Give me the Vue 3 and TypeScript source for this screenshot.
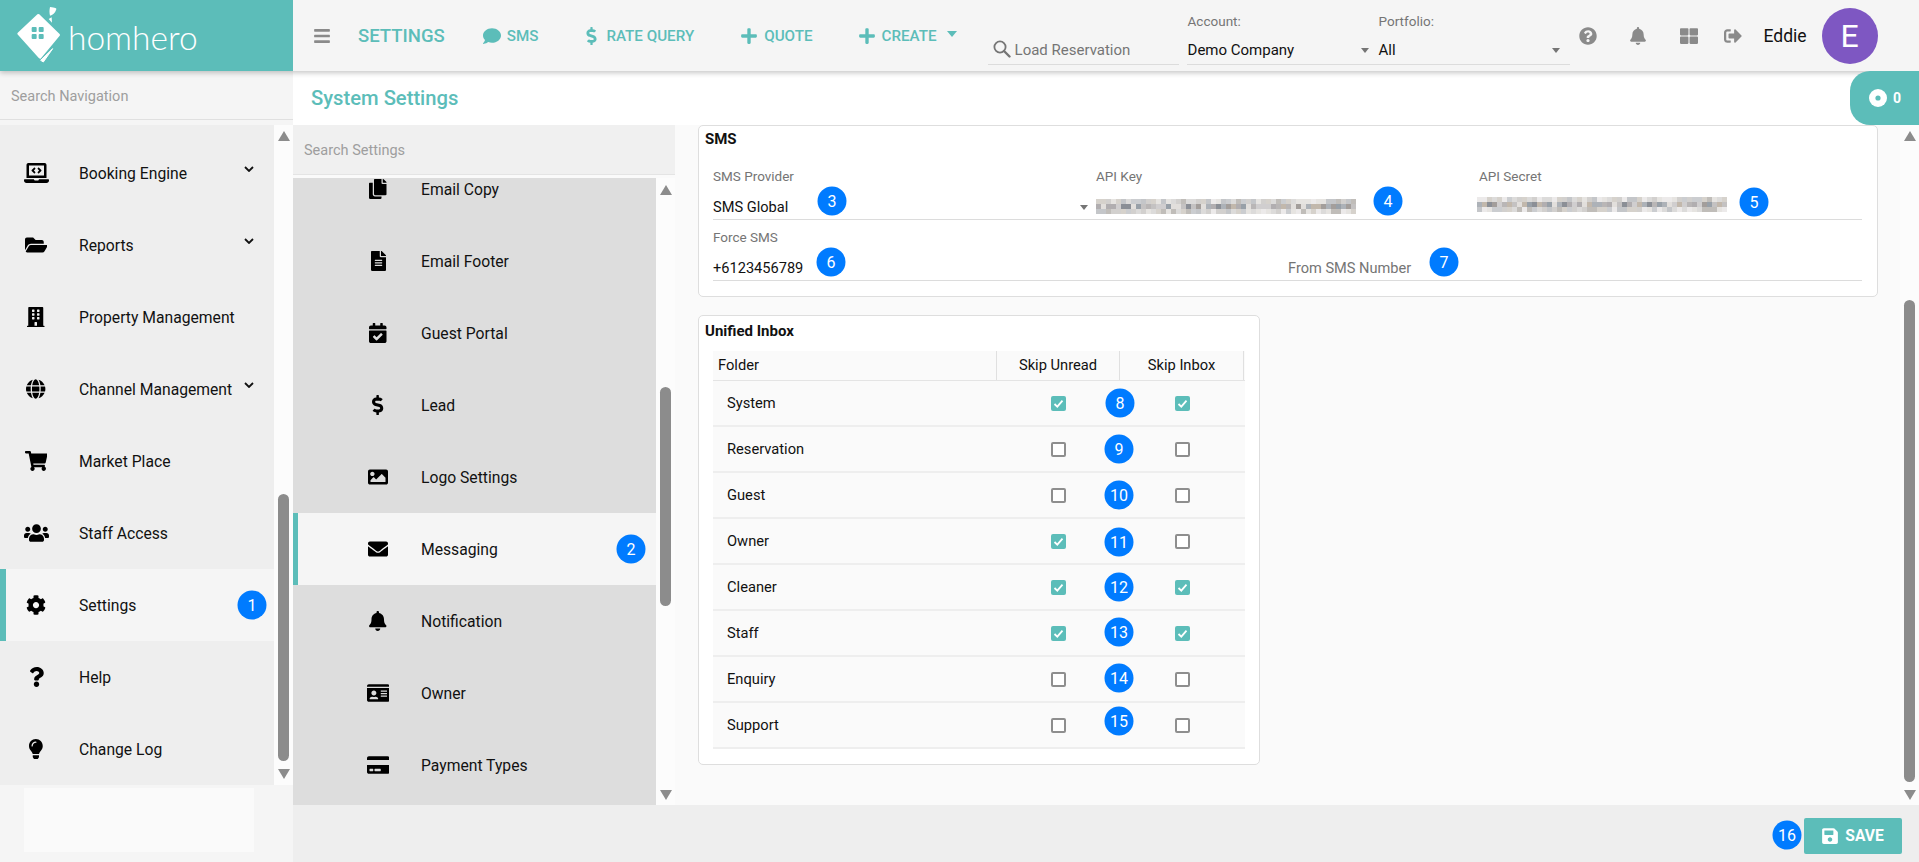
<script setup lang="ts">
interface Icon {
  w: number;
  d: string;
}

const icons: Record<string, Icon> = {
  bars: { w: 448, d: 'M16 132h416c8.837 0 16-7.163 16-16V76c0-8.837-7.163-16-16-16H16C7.163 60 0 67.163 0 76v40c0 8.837 7.163 16 16 16zm0 160h416c8.837 0 16-7.163 16-16v-40c0-8.837-7.163-16-16-16H16c-8.837 0-16 7.163-16 16v40c0 8.837 7.163 16 16 16zm0 160h416c8.837 0 16-7.163 16-16v-40c0-8.837-7.163-16-16-16H16c-8.837 0-16 7.163-16 16v40c0 8.837 7.163 16 16 16z' },
  comment: { w: 512, d: 'M256 32C114.6 32 0 125.1 0 240c0 49.6 21.4 95 57 130.7C44.5 421.1 2.7 466 2.2 466.5c-2.2 2.3-2.8 5.7-1.5 8.7S4.8 480 8 480c66.3 0 116-31.8 140.6-51.4 32.7 12.3 69 19.4 107.4 19.4 141.4 0 256-93.1 256-208S397.4 32 256 32z' },
  dollar: { w: 288, d: 'M209.2 233.4l-108-31.6C88.7 198.2 80 186.5 80 173.5c0-16.3 13.2-29.5 29.5-29.5h66.3c12.2 0 24.2 3.7 34.2 10.5 6.1 4.1 14.3 3.1 19.5-2l34.8-34c7.1-6.9 6.1-18.4-1.8-24.5C238 74.8 207.4 64.1 176 64V16c0-8.8-7.2-16-16-16h-32c-8.8 0-16 7.2-16 16v48h-2.5C45.8 64-5.4 118.7.5 183.6c4.2 46.1 39.4 83.6 83.8 96.6l102.5 30c12.5 3.7 21.2 15.3 21.2 28.3 0 16.3-13.2 29.5-29.5 29.5h-66.3C100 368 88 364.3 78 357.5c-6.1-4.1-14.3-3.1-19.5 2l-34.8 34c-7.1 6.9-6.1 18.4 1.8 24.5 24.5 19.2 55.1 29.9 86.5 30v48c0 8.8 7.2 16 16 16h32c8.8 0 16-7.2 16-16v-48.2c46.6-.9 90.3-28.6 105.7-72.7 21.5-61.6-14.6-124.8-72.5-141.7z' },
  plus: { w: 448, d: 'M416 208H272V64c0-17.67-14.33-32-32-32h-32c-17.67 0-32 14.33-32 32v144H32c-17.67 0-32 14.33-32 32v32c0 17.67 14.33 32 32 32h144v144c0 17.67 14.33 32 32 32h32c17.67 0 32-14.33 32-32V304h144c17.67 0 32-14.33 32-32v-32c0-17.67-14.33-32-32-32z' },
  help: { w: 512, d: 'M504 256c0 136.997-111.043 248-248 248S8 392.997 8 256C8 119.083 119.043 8 256 8s248 111.083 248 248zM262.655 90c-54.497 0-89.255 22.957-116.549 63.758-3.536 5.286-2.353 12.415 2.715 16.258l34.699 26.31c5.205 3.947 12.621 3.008 16.665-2.122 17.864-22.658 30.113-35.797 57.303-35.797 20.429 0 45.698 13.148 45.698 32.958 0 14.976-12.363 22.667-32.534 33.976C247.128 238.528 216 254.941 216 296v4c0 6.627 5.373 12 12 12h56c6.627 0 12-5.373 12-12v-1.333c0-28.462 83.186-29.647 83.186-106.667 0-58.002-60.165-102-116.531-102zM256 338c-25.365 0-46 20.635-46 46 0 25.364 20.635 46 46 46s46-20.636 46-46c0-25.365-20.635-46-46-46z' },
  bell: { w: 448, d: 'M224 512c35.32 0 63.97-28.65 63.97-64H160.03c0 35.35 28.65 64 63.97 64zm215.39-149.71c-19.32-20.76-55.47-51.99-55.47-154.29 0-77.7-54.48-139.9-127.94-155.16V32c0-17.67-14.32-32-31.98-32s-31.98 14.33-31.98 32v20.84C118.56 68.1 64.08 130.3 64.08 208c0 102.3-36.15 133.53-55.47 154.29-6 6.45-8.66 14.16-8.61 21.71.11 16.4 12.98 32 32.1 32h383.8c19.12 0 32-15.6 32.1-32 .05-7.55-2.61-15.27-8.61-21.71z' },
  grid: { w: 512, d: 'M296 32h192c13.255 0 24 10.745 24 24v160c0 13.255-10.745 24-24 24H296c-13.255 0-24-10.745-24-24V56c0-13.255 10.745-24 24-24zm-80 0H24C10.745 32 0 42.745 0 56v160c0 13.255 10.745 24 24 24h192c13.255 0 24-10.745 24-24V56c0-13.255-10.745-24-24-24zM0 296v160c0 13.255 10.745 24 24 24h192c13.255 0 24-10.745 24-24V296c0-13.255-10.745-24-24-24H24c-13.255 0-24 10.745-24 24zm296 184h192c13.255 0 24-10.745 24-24V296c0-13.255-10.745-24-24-24H296c-13.255 0-24 10.745-24 24v160c0 13.255 10.745 24 24 24z' },
  signout: { w: 512, d: 'M497 273L329 441c-15 15-41 4.5-41-17v-96H152c-13.3 0-24-10.7-24-24v-96c0-13.3 10.7-24 24-24h136V88c0-21.4 25.9-32 41-17l168 168c9.3 9.4 9.3 24.6 0 34zM192 436v-40c0-6.6-5.4-12-12-12H96c-17.7 0-32-14.3-32-32V160c0-17.7 14.3-32 32-32h84c6.6 0 12-5.4 12-12V76c0-6.6-5.4-12-12-12H96c-53 0-96 43-96 96v192c0 53 43 96 96 96h84c6.6 0 12-5.4 12-12z' },
  laptop: { w: 640, d: 'M255.03 261.65c6.25 6.25 16.38 6.25 22.63 0l11.31-11.31c6.25-6.25 6.25-16.38 0-22.63L253.25 192l35.71-35.72c6.25-6.25 6.25-16.38 0-22.63l-11.31-11.31c-6.25-6.25-16.38-6.25-22.63 0l-58.34 58.34c-6.25 6.25-6.25 16.38 0 22.63l58.35 58.34zm96.01-11.3l11.31 11.31c6.25 6.25 16.38 6.25 22.63 0l58.34-58.34c6.25-6.25 6.25-16.38 0-22.63l-58.34-58.34c-6.25-6.25-16.38-6.25-22.63 0l-11.31 11.31c-6.25 6.25-6.25 16.38 0 22.63L386.75 192l-35.71 35.72c-6.25 6.25-6.25 16.38 0 22.63zM624 416H381.54c-.74 19.81-14.71 32-32.74 32H288c-18.69 0-33.02-17.47-32.77-32H16c-8.8 0-16 7.2-16 16v16c0 35.2 28.8 64 64 64h512c35.2 0 64-28.8 64-64v-16c0-8.8-7.2-16-16-16zM576 48c0-26.4-21.6-48-48-48H112C85.6 0 64 21.6 64 48v336h512V48zm-64 272H128V64h384v256z' },
  folder: { w: 576, d: 'M572.694 292.093L500.27 416.248A63.997 63.997 0 0 1 444.989 448H45.025c-18.523 0-30.064-20.093-20.731-36.093l72.424-124.155A64 64 0 0 1 152 256h399.964c18.523 0 30.064 20.093 20.73 36.093zM152 224h328v-48c0-26.51-21.49-48-48-48H272l-64-64H48C21.49 64 0 85.49 0 112v278.046l69.077-118.418C86.214 242.25 117.989 224 152 224z' },
  building: { w: 448, d: 'M436 480h-20V24c0-13.255-10.745-24-24-24H56C42.745 0 32 10.745 32 24v456H12c-6.627 0-12 5.373-12 12v20h448v-20c0-6.627-5.373-12-12-12zM128 76c0-6.627 5.373-12 12-12h40c6.627 0 12 5.373 12 12v40c0 6.627-5.373 12-12 12h-40c-6.627 0-12-5.373-12-12V76zm0 96c0-6.627 5.373-12 12-12h40c6.627 0 12 5.373 12 12v40c0 6.627-5.373 12-12 12h-40c-6.627 0-12-5.373-12-12v-40zm52 148h-40c-6.627 0-12-5.373-12-12v-40c0-6.627 5.373-12 12-12h40c6.627 0 12 5.373 12 12v40c0 6.627-5.373 12-12 12zm76 160h-64v-84c0-6.627 5.373-12 12-12h40c6.627 0 12 5.373 12 12v84zm64-172c0 6.627-5.373 12-12 12h-40c-6.627 0-12-5.373-12-12v-40c0-6.627 5.373-12 12-12h40c6.627 0 12 5.373 12 12v40zm0-96c0 6.627-5.373 12-12 12h-40c-6.627 0-12-5.373-12-12v-40c0-6.627 5.373-12 12-12h40c6.627 0 12 5.373 12 12v40zm0-96c0 6.627-5.373 12-12 12h-40c-6.627 0-12-5.373-12-12V76c0-6.627 5.373-12 12-12h40c6.627 0 12 5.373 12 12v40z' },
  globe: { w: 496, d: 'M336.5 160C322 70.7 287.8 8 248 8s-74 62.7-88.5 152h177zM152 256c0 22.2 1.2 43.5 3.3 64h185.3c2.1-20.5 3.3-41.8 3.3-64s-1.2-43.5-3.3-64H155.3c-2.1 20.5-3.3 41.8-3.3 64zm324.7-96c-28.6-67.9-86.5-120.4-158-141.6 24.4 33.8 41.2 84.7 50 141.6h108zM177.2 18.4C105.8 39.6 47.8 92.1 19.3 160h108c8.7-56.9 25.5-107.8 49.9-141.6zM487.4 192H372.7c2.1 21 3.3 42.5 3.3 64s-1.2 43-3.3 64h114.6c5.5-20.5 8.6-41.8 8.6-64s-3.1-43.5-8.5-64zM120 256c0-21.5 1.2-43 3.3-64H8.6C3.2 212.5 0 233.8 0 256s3.2 43.5 8.6 64h114.6c-2-21-3.2-42.5-3.2-64zm39.5 96c14.5 89.3 48.7 152 88.5 152s74-62.7 88.5-152h-177zm159.3 141.6c71.4-21.2 129.4-73.7 158-141.6h-108c-8.8 56.9-25.6 107.8-50 141.6zM19.3 352c28.6 67.9 86.5 120.4 158 141.6-24.4-33.8-41.2-84.7-50-141.6h-108z' },
  cart: { w: 576, d: 'M528.12 301.319l47.273-208C578.806 78.301 567.391 64 551.99 64H159.208l-9.166-44.81C147.758 8.021 137.93 0 126.529 0H24C10.745 0 0 10.745 0 24v16c0 13.255 10.745 24 24 24h69.883l70.248 343.435C147.325 417.1 136 435.222 136 456c0 30.928 25.072 56 56 56s56-25.072 56-56c0-15.674-6.447-29.835-16.824-40h209.647C430.447 426.165 424 440.326 424 456c0 30.928 25.072 56 56 56s56-25.072 56-56c0-22.172-12.888-41.332-31.579-50.405l5.517-24.276c3.413-15.018-8.002-29.319-23.403-29.319H218.117l-6.545-32h293.145c11.206 0 20.92-7.754 23.403-18.681z' },
  users: { w: 640, d: 'M96 224c35.3 0 64-28.7 64-64s-28.7-64-64-64-64 28.7-64 64 28.7 64 64 64zm448 0c35.3 0 64-28.7 64-64s-28.7-64-64-64-64 28.7-64 64 28.7 64 64 64zm32 32h-64c-17.6 0-33.5 7.1-45.1 18.6 40.3 22.1 68.9 62 75.1 109.4h66c17.7 0 32-14.3 32-32v-32c0-35.3-28.7-64-64-64zm-256 0c61.9 0 112-50.1 112-112S381.9 32 320 32 208 82.1 208 144s50.1 112 112 112zm76.8 32h-8.3c-20.8 10-43.9 16-68.5 16s-47.6-6-68.5-16h-8.3C179.6 288 128 339.6 128 403.2V432c0 26.5 21.5 48 48 48h288c26.5 0 48-21.5 48-48v-28.8c0-63.6-51.6-115.2-115.2-115.2zm-223.7-13.4C161.5 263.1 145.6 256 128 256H64c-35.3 0-64 28.7-64 64v32c0 17.7 14.3 32 32 32h65.9c6.3-47.4 34.9-87.3 75.2-109.4z' },
  cog: { w: 512, d: 'M487.4 315.7l-42.6-24.6c4.3-23.2 4.3-47 0-70.2l42.6-24.6c4.9-2.8 7.1-8.6 5.5-14-11.1-35.6-30-67.8-54.7-94.6-3.8-4.1-10-5.1-14.8-2.3L380.8 110c-17.9-15.4-38.5-27.3-60.8-35.1V25.8c0-5.6-3.9-10.5-9.4-11.7-36.7-8.2-74.3-7.8-109.2 0-5.5 1.2-9.4 6.1-9.4 11.7V75c-22.2 7.9-42.8 19.8-60.8 35.1L88.7 85.5c-4.9-2.8-11-1.9-14.8 2.3-24.7 26.7-43.6 58.9-54.7 94.6-1.7 5.4.6 11.2 5.5 14L67.3 221c-4.3 23.2-4.3 47 0 70.2l-42.6 24.6c-4.9 2.8-7.1 8.6-5.5 14 11.1 35.6 30 67.8 54.7 94.6 3.8 4.1 10 5.1 14.8 2.3l42.6-24.6c17.9 15.4 38.5 27.3 60.8 35.1v49.2c0 5.6 3.9 10.5 9.4 11.7 36.7 8.2 74.3 7.8 109.2 0 5.5-1.2 9.4-6.1 9.4-11.7v-49.2c22.2-7.9 42.8-19.8 60.8-35.1l42.6 24.6c4.9 2.8 11 1.9 14.8-2.3 24.7-26.7 43.6-58.9 54.7-94.6 1.5-5.5-.7-11.3-5.6-14.1zM256 336c-44.1 0-80-35.9-80-80s35.9-80 80-80 80 35.9 80 80-35.9 80-80 80z' },
  question: { w: 384, d: 'M202.021 0C122.202 0 70.503 32.703 29.914 91.026c-7.363 10.58-5.093 25.086 5.178 32.874l43.138 32.709c10.373 7.865 25.132 6.026 33.253-4.148 25.049-31.381 43.63-49.449 82.757-49.449 30.764 0 68.816 19.799 68.816 49.631 0 22.552-18.617 34.134-48.993 51.164-35.423 19.86-82.299 44.576-82.299 106.405V320c0 13.255 10.745 24 24 24h72.471c13.255 0 24-10.745 24-24v-5.773c0-42.86 125.268-44.645 125.268-160.627C377.504 66.256 286.902 0 202.021 0zM192 373.459c-38.196 0-69.271 31.075-69.271 69.271 0 38.195 31.075 69.27 69.271 69.27s69.271-31.075 69.271-69.271-31.075-69.27-69.271-69.27z' },
  bulb: { w: 352, d: 'M96.06 454.35c.01 6.29 1.87 12.45 5.36 17.69l17.09 25.69a31.99 31.99 0 0 0 26.64 14.28h61.71a31.99 31.99 0 0 0 26.64-14.28l17.09-25.69a31.989 31.989 0 0 0 5.36-17.69l.04-38.35H96.01l.05 38.35zM0 176c0 44.37 16.45 84.85 43.56 115.78 16.52 18.85 42.36 58.23 52.21 91.45.04.26.07.52.11.78h160.24c.04-.26.07-.51.11-.78 9.85-33.22 35.69-72.6 52.21-91.45C335.55 260.85 352 220.37 352 176 352 78.61 272.91-.3 175.45 0 73.44.31 0 82.97 0 176zm176-80c-44.11 0-80 35.89-80 80 0 8.84-7.16 16-16 16s-16-7.16-16-16c0-61.76 50.24-112 112-112 8.84 0 16 7.16 16 16s-7.16 16-16 16z' },
  copy: { w: 448, d: 'M320 448v40c0 13.255-10.745 24-24 24H24c-13.255 0-24-10.745-24-24V120c0-13.255 10.745-24 24-24h72v296c0 30.879 25.121 56 56 56h168zm0-344V0H152c-13.255 0-24 10.745-24 24v368c0 13.255 10.745 24 24 24h272c13.255 0 24-10.745 24-24V128H344c-13.2 0-24-10.8-24-24zm120.971-31.029L375.029 7.029A24 24 0 0 0 358.059 0H352v96h96v-6.059a24 24 0 0 0-7.029-16.97z' },
  file: { w: 384, d: 'M224 136V0H24C10.7 0 0 10.7 0 24v464c0 13.3 10.7 24 24 24h336c13.3 0 24-10.7 24-24V160H248c-13.2 0-24-10.8-24-24zm64 236c0 6.6-5.4 12-12 12H108c-6.6 0-12-5.4-12-12v-8c0-6.6 5.4-12 12-12h168c6.6 0 12 5.4 12 12v8zm0-64c0 6.6-5.4 12-12 12H108c-6.6 0-12-5.4-12-12v-8c0-6.6 5.4-12 12-12h168c6.6 0 12 5.4 12 12v8zm0-72v8c0 6.6-5.4 12-12 12H108c-6.6 0-12-5.4-12-12v-8c0-6.6 5.4-12 12-12h168c6.6 0 12 5.4 12 12zm96-114.1v6.1H256V0h6.1c6.4 0 12.5 2.5 17 7l97.9 98c4.5 4.5 7 10.6 7 16.9z' },
  calendar: { w: 448, d: 'M436 160H12c-6.627 0-12-5.373-12-12v-36c0-26.51 21.49-48 48-48h48V12c0-6.627 5.373-12 12-12h40c6.627 0 12 5.373 12 12v52h128V12c0-6.627 5.373-12 12-12h40c6.627 0 12 5.373 12 12v52h48c26.51 0 48 21.49 48 48v36c0 6.627-5.373 12-12 12zM12 192h424c6.627 0 12 5.373 12 12v260c0 26.51-21.49 48-48 48H48c-26.51 0-48-21.49-48-48V204c0-6.627 5.373-12 12-12zm333.296 95.947l-28.169-28.398c-4.667-4.705-12.265-4.736-16.97-.068L194.12 364.665l-45.98-46.352c-4.667-4.705-12.266-4.736-16.971-.068l-28.397 28.17c-4.705 4.667-4.736 12.265-.068 16.97l82.601 83.269c4.667 4.705 12.265 4.736 16.97.068l142.953-141.805c4.705-4.667 4.736-12.265.068-16.97z' },
  image: { w: 512, d: 'M464 448H48c-26.51 0-48-21.49-48-48V112c0-26.51 21.49-48 48-48h416c26.51 0 48 21.49 48 48v288c0 26.51-21.49 48-48 48zM112 120c-30.928 0-56 25.072-56 56s25.072 56 56 56 56-25.072 56-56-25.072-56-56-56zM64 384h384V272l-87.515-87.515c-4.686-4.686-12.284-4.686-16.971 0L208 320l-55.515-55.515c-4.686-4.686-12.284-4.686-16.971 0L64 336v48z' },
  envelope: { w: 512, d: 'M502.3 190.8c3.9-3.1 9.7-.2 9.7 4.7V400c0 26.5-21.5 48-48 48H48c-26.5 0-48-21.5-48-48V195.6c0-5 5.7-7.8 9.7-4.7 22.4 17.4 52.1 39.5 154.1 113.6 21.1 15.4 56.7 47.8 92.2 47.6 35.7.3 72-32.8 92.3-47.6 102-74.1 131.6-96.3 154-113.7zM256 320c23.2.4 56.6-29.2 73.4-41.4 132.7-96.3 142.8-104.7 173.4-128.7 5.8-4.5 9.2-11.5 9.2-18.9v-19c0-26.5-21.5-48-48-48H48C21.5 64 0 85.5 0 112v19c0 7.4 3.4 14.3 9.2 18.9 30.6 23.9 40.7 32.4 173.4 128.7 16.8 12.2 50.2 41.8 73.4 41.4z' },
  idcard: { w: 576, d: 'M528 32H48C21.5 32 0 53.5 0 80v16h576V80c0-26.5-21.5-48-48-48zM0 432c0 26.5 21.5 48 48 48h480c26.5 0 48-21.5 48-48V128H0v304zm352-232c0-4.4 3.6-8 8-8h144c4.4 0 8 3.6 8 8v16c0 4.4-3.6 8-8 8H360c-4.4 0-8-3.6-8-8v-16zm0 64c0-4.4 3.6-8 8-8h144c4.4 0 8 3.6 8 8v16c0 4.4-3.6 8-8 8H360c-4.4 0-8-3.6-8-8v-16zm0 64c0-4.4 3.6-8 8-8h144c4.4 0 8 3.6 8 8v16c0 4.4-3.6 8-8 8H360c-4.4 0-8-3.6-8-8v-16zM176 192c35.3 0 64 28.7 64 64s-28.7 64-64 64-64-28.7-64-64 28.7-64 64-64zM67.1 396.2C75.5 370.5 99.6 352 128 352h8.2c12.3 5.1 25.7 8 39.8 8s27.6-2.9 39.8-8h8.2c28.4 0 52.5 18.5 60.9 44.2 3.2 9.9-5.2 19.8-15.6 19.8H82.7c-10.4 0-18.8-10-15.6-19.8z' },
  card: { w: 576, d: 'M0 432c0 26.5 21.5 48 48 48h480c26.5 0 48-21.5 48-48V256H0v176zm192-68c0-6.6 5.4-12 12-12h136c6.6 0 12 5.4 12 12v40c0 6.6-5.4 12-12 12H204c-6.6 0-12-5.4-12-12v-40zm-128 0c0-6.6 5.4-12 12-12h72c6.6 0 12 5.4 12 12v40c0 6.6-5.4 12-12 12H76c-6.6 0-12-5.4-12-12v-40zM576 80v48H0V80c0-26.5 21.5-48 48-48h480c26.5 0 48 21.5 48 48z' },
  save: { w: 448, d: 'M433.941 129.941l-83.882-83.882A48 48 0 0 0 316.118 32H48C21.49 32 0 53.49 0 80v352c0 26.51 21.49 48 48 48h352c26.51 0 48-21.49 48-48V163.882a48 48 0 0 0-14.059-33.941zM224 416c-35.346 0-64-28.654-64-64 0-35.346 28.654-64 64-64s64 28.654 64 64c0 35.346-28.654 64-64 64zm96-304.52V212c0 6.627-5.373 12-12 12H76c-6.627 0-12-5.373-12-12V108c0-6.627 5.373-12 12-12h228.52c3.183 0 6.235 1.264 8.485 3.515l3.48 3.48A11.996 11.996 0 0 1 320 111.48z' },
};

const navItems = [
  { label: 'Booking Engine', icon: 'laptop', more: true },
  { label: 'Reports', icon: 'folder', more: true },
  { label: 'Property Management', icon: 'building' },
  { label: 'Channel Management', icon: 'globe', more: true },
  { label: 'Market Place', icon: 'cart' },
  { label: 'Staff Access', icon: 'users' },
  { label: 'Settings', icon: 'cog', active: true },
  { label: 'Help', icon: 'question' },
  { label: 'Change Log', icon: 'bulb' },
];

const settingItems = [
  { label: 'Email Copy', icon: 'copy' },
  { label: 'Email Footer', icon: 'file' },
  { label: 'Guest Portal', icon: 'calendar' },
  { label: 'Lead', icon: 'dollar' },
  { label: 'Logo Settings', icon: 'image' },
  { label: 'Messaging', icon: 'envelope', active: true },
  { label: 'Notification', icon: 'bell' },
  { label: 'Owner', icon: 'idcard' },
  { label: 'Payment Types', icon: 'card' },
];

const folders = [
  { name: 'System', unread: true, inbox: true },
  { name: 'Reservation', unread: false, inbox: false },
  { name: 'Guest', unread: false, inbox: false },
  { name: 'Owner', unread: true, inbox: false },
  { name: 'Cleaner', unread: true, inbox: true },
  { name: 'Staff', unread: true, inbox: true },
  { name: 'Enquiry', unread: false, inbox: false },
  { name: 'Support', unread: false, inbox: false },
];

// numbered callouts drawn over the screenshot: centre x / y on the page
const badges = [
  [252, 605], [631, 549], [832, 201], [1388, 201], [1754, 202], [831, 262], [1444, 262],
  [1120, 403], [1119, 449], [1119, 495], [1119, 542], [1119, 587], [1119, 632], [1119, 678], [1119, 721],
  [1787, 835],
];

// pixelated stand-in for the masked API keys
function mosaic(seed: number, cols: number): string[] {
  const mid = ['#a39e9b', '#b9b6b6', '#98a0a8', '#c4c2c2', '#adb2b8', '#8b8f96', '#d0cecf', '#c2b8ac', '#b1aeb0', '#e2dfdc'];
  const edge = ['#d2d0ce', '#c4c6c9', '#dcdbda', '#e6e4e1', '#cbcdd0', '#c0bdb9', '#eceaea', '#d6d2cc'];
  const out: string[] = [];
  let s = seed;
  for (let r = 0; r < 3; r++) {
    const tones = r === 1 ? mid : edge;
    for (let c = 0; c < cols; c++) {
      s = (s * 9301 + 49297) % 233280;
      out.push(tones[Math.floor((s / 233280) * tones.length)]);
    }
  }
  return out;
}
const apiKeyBlur = mosaic(17, 52);
const apiSecretBlur = mosaic(91, 50);
</script>

<template>
  <div class="app">
    <header class="topbar">
      <div class="brand">
        <svg class="brand__mark" viewBox="0 0 180 213" aria-hidden="true">
          <path d="M85 46 L146 105 L90 172 L26 101 Z" fill="#fff" stroke="#fff" stroke-width="8" stroke-linejoin="round" />
          <path d="M142 130 L96 186" stroke="#5cbdb9" stroke-width="8" />
          <path d="M128 146 L92 181 L100 186 L128 146 Z" fill="#fff" stroke="#fff" stroke-width="3" stroke-linejoin="round" />
          <path d="M120 21 C136 24 140 24 139 28 C135 40 128 46 120 47 C118 38 118 30 120 21 Z" fill="#fff" />
          <path d="M116 57 L126 68 L125 52 Z" fill="#fff" />
          <rect x="65" y="81" width="15" height="15" rx="3" fill="#5cbdb9" />
          <rect x="86" y="81" width="15" height="15" rx="3" fill="#5cbdb9" />
          <rect x="65" y="102" width="15" height="15" rx="3" fill="#5cbdb9" />
          <rect x="86" y="102" width="15" height="15" rx="3" fill="#5cbdb9" />
        </svg>
        <span class="brand__name">homhero</span>
      </div>

      <svg class="topbar__menu" :viewBox="`0 0 ${icons.bars.w} 512`" aria-hidden="true"><path :d="icons.bars.d" /></svg>
      <span class="topbar__title">SETTINGS</span>
      <a class="action action--sms"><svg class="action__icon" :viewBox="`0 0 ${icons.comment.w} 512`"><path :d="icons.comment.d" /></svg>SMS</a>
      <a class="action action--rate"><svg class="action__icon action__icon--dollar" :viewBox="`0 0 ${icons.dollar.w} 512`"><path :d="icons.dollar.d" /></svg>RATE QUERY</a>
      <a class="action action--quote"><svg class="action__icon" :viewBox="`0 0 ${icons.plus.w} 512`"><path :d="icons.plus.d" /></svg>QUOTE</a>
      <a class="action action--create"><svg class="action__icon" :viewBox="`0 0 ${icons.plus.w} 512`"><path :d="icons.plus.d" /></svg>CREATE<span class="action__caret"></span></a>

      <div class="hfield hfield--search">
        <svg class="hfield__glass" viewBox="0 0 18 18" aria-hidden="true">
          <circle cx="7" cy="7" r="5.6" fill="none" stroke="#757575" stroke-width="1.8" />
          <path d="M11 11 L16.5 16.5" stroke="#757575" stroke-width="2.4" stroke-linecap="round" />
        </svg>
        <span class="hfield__placeholder">Load Reservation</span>
      </div>
      <div class="hfield hfield--select hfield--account">
        <label>Account:</label>
        <span class="hfield__value">Demo Company</span>
        <span class="arrow"></span>
      </div>
      <div class="hfield hfield--select hfield--portfolio">
        <label>Portfolio:</label>
        <span class="hfield__value">All</span>
        <span class="arrow"></span>
      </div>

      <svg class="ticon ticon--help" viewBox="0 0 512 512" aria-hidden="true"><path :d="icons.help.d" /></svg>
      <svg class="ticon ticon--bell" viewBox="0 0 448 512" aria-hidden="true"><path :d="icons.bell.d" /></svg>
      <svg class="ticon ticon--grid" viewBox="0 0 512 512" aria-hidden="true"><path :d="icons.grid.d" /></svg>
      <svg class="ticon ticon--out" viewBox="0 0 512 512" aria-hidden="true"><path :d="icons.signout.d" /></svg>
      <span class="topbar__user">Eddie</span>
      <span class="topbar__avatar">E</span>
    </header>

    <div class="layout">
      <aside class="sidebar">
        <div class="sidebar__search">Search Navigation</div>
        <div class="sidebar__body">
          <nav class="menu menu--nav">
            <a v-for="item in navItems" :key="item.label" class="menu__item" :class="{ 'menu__item--active': item.active }">
              <span class="menu__icon">
                <svg :viewBox="`0 0 ${icons[item.icon].w} 512`" :width="(icons[item.icon].w / 512) * 20" height="20"><path :d="icons[item.icon].d" /></svg>
              </span>
              <span class="menu__label">{{ item.label }}</span>
              <svg v-if="item.more" class="menu__chevron" viewBox="0 0 10 6"><path d="M1 1 L5 5 L9 1" /></svg>
            </a>
          </nav>
          <div class="scroll scroll--nav">
            <span class="scroll__up"></span>
            <span class="scroll__thumb"></span>
            <span class="scroll__down"></span>
          </div>
        </div>
        <div class="sidebar__foot"><div class="sidebar__slot"></div></div>
      </aside>

      <main class="main">
        <div class="main__title">System Settings</div>
        <div class="main__panes">
          <section class="settings">
            <div class="settings__search">Search Settings</div>
            <div class="settings__body">
              <nav class="menu menu--settings">
                <a v-for="item in settingItems" :key="item.label" class="menu__item" :class="{ 'menu__item--active': item.active }">
                  <span class="menu__icon">
                    <svg :viewBox="`0 0 ${icons[item.icon].w} 512`" :width="(icons[item.icon].w / 512) * 20" height="20"><path :d="icons[item.icon].d" /></svg>
                  </span>
                  <span class="menu__label">{{ item.label }}</span>
                </a>
              </nav>
              <div class="scroll scroll--settings">
                <span class="scroll__up"></span>
                <span class="scroll__thumb"></span>
                <span class="scroll__down"></span>
              </div>
            </div>
          </section>

          <section class="content">
            <div class="content__scroll">
              <div class="card card--sms">
                <h3 class="card__title">SMS</h3>
                <div class="fields fields--three">
                  <div class="field">
                    <label>SMS Provider</label>
                    <div class="field__value">SMS Global<span class="arrow"></span></div>
                  </div>
                  <div class="field">
                    <label>API Key</label>
                    <div class="field__value">
                      <div class="blur blur--key"><i v-for="(c, i) in apiKeyBlur" :key="i" :style="{ background: c }"></i></div>
                    </div>
                  </div>
                  <div class="field">
                    <label>API Secret</label>
                    <div class="field__value">
                      <div class="blur blur--secret"><i v-for="(c, i) in apiSecretBlur" :key="i" :style="{ background: c }"></i></div>
                    </div>
                  </div>
                </div>
                <div class="fields fields--two">
                  <div class="field">
                    <label>Force SMS</label>
                    <div class="field__value">+6123456789</div>
                  </div>
                  <div class="field">
                    <label class="field__ghost">&nbsp;</label>
                    <div class="field__value field__value--placeholder">From SMS Number</div>
                  </div>
                </div>
              </div>

              <div class="card card--inbox">
                <h3 class="card__title">Unified Inbox</h3>
                <div class="inbox">
                  <div class="inbox__head">
                    <span class="inbox__folder">Folder</span>
                    <span class="inbox__col">Skip Unread</span>
                    <span class="inbox__col">Skip Inbox</span>
                  </div>
                  <div v-for="f in folders" :key="f.name" class="inbox__row">
                    <span class="inbox__name">{{ f.name }}</span>
                    <span class="inbox__check">
                      <span class="check" :class="{ 'check--on': f.unread }">
                        <svg v-if="f.unread" viewBox="0 0 15 15"><path d="M3.5 8 L6.3 10.6 L11.5 4.6" /></svg>
                      </span>
                    </span>
                    <span class="inbox__check">
                      <span class="check" :class="{ 'check--on': f.inbox }">
                        <svg v-if="f.inbox" viewBox="0 0 15 15"><path d="M3.5 8 L6.3 10.6 L11.5 4.6" /></svg>
                      </span>
                    </span>
                  </div>
                </div>
              </div>
            </div>
            <div class="scroll scroll--content">
              <span class="scroll__up"></span>
              <span class="scroll__thumb"></span>
              <span class="scroll__down"></span>
            </div>
          </section>
        </div>
        <footer class="savebar">
          <button type="button" class="savebar__btn">
            <svg viewBox="0 0 448 512" width="16" height="18" aria-hidden="true"><path :d="icons.save.d" /></svg>
            SAVE
          </button>
        </footer>
      </main>
    </div>

    <div class="queue">
      <svg viewBox="0 0 18 18" width="18" height="18" aria-hidden="true">
        <circle cx="9" cy="9" r="9" fill="#fff" />
        <circle cx="9" cy="9" r="2.6" fill="#5cbdb9" />
      </svg>
      <span>0</span>
    </div>

    <span
      v-for="(b, i) in badges"
      :key="i"
      class="badge"
      :style="{ left: b[0] + 'px', top: b[1] + 'px' }"
    >{{ i + 1 }}</span>
  </div>
</template>

<style>
html,
body {
  margin: 0;
  overflow: hidden;
}
</style>

<style scoped>
.app {
  position: relative;
  display: flex;
  flex-direction: column;
  width: 1919px;
  height: 862px;
  overflow: hidden;
  background: #fafafa;
  color: #111;
  font-family: Roboto, "Liberation Sans", sans-serif;
  font-size: 14.7px;
}

/* top bar */
.topbar {
  position: relative;
  z-index: 2;
  display: flex;
  align-items: center;
  flex: 0 0 71px;
  background: #f5f5f5;
  box-shadow: 0 2px 5px rgba(0, 0, 0, 0.22);
}

.brand {
  display: flex;
  align-items: center;
  flex: 0 0 293px;
  height: 100%;
  padding-left: 10px;
  box-sizing: border-box;
  background: #5cbdb9;
}

.brand__mark {
  flex: 0 0 60px;
  width: 60px;
  height: 71px;
}

.brand__name {
  margin-left: -2px;
  padding-top: 4px;
  color: #fff;
  font-family: Lato, sans-serif;
  font-size: 33.5px;
  font-weight: 300;
  line-height: 1;
}

.topbar__menu {
  flex: none;
  width: 16px;
  height: 18px;
  margin-left: 21px;
  fill: #8a8a8a;
}

.topbar__title {
  margin-left: 28px;
  color: #5cbdb9;
  font-size: 18.5px;
  font-weight: 500;
}

.action {
  display: inline-flex;
  align-items: center;
  color: #5cbdb9;
  font-size: 15.2px;
  font-weight: 500;
  fill: #5cbdb9;
  white-space: nowrap;
}

.action__icon {
  flex: none;
  width: 18px;
  height: 18px;
  margin-right: 6px;
}

.action__icon--dollar {
  width: 11px;
  margin-right: 9px;
}

.action--sms {
  margin-left: 38px;
}

.action--rate {
  margin-left: 48px;
}

.action--quote {
  margin-left: 47px;
}

.action--create {
  margin-left: 46px;
}

.action--quote .action__icon,
.action--create .action__icon {
  width: 16px;
  margin-right: 7px;
}

.action__caret {
  width: 0;
  height: 0;
  margin: -4px 0 0 10px;
  border-left: 5px solid transparent;
  border-right: 5px solid transparent;
  border-top: 6px solid #5cbdb9;
}

.hfield {
  position: relative;
  flex: none;
  align-self: flex-start;
  box-sizing: border-box;
  height: 65px;
  border-bottom: 1px solid #dcdcdc;
}

.hfield--search {
  display: flex;
  align-items: flex-end;
  width: 191px;
  margin-left: 31px;
  padding: 0 0 5px 5px;
}

.hfield__glass {
  flex: none;
  width: 18px;
  height: 18px;
  margin-bottom: 1px;
}

.hfield__placeholder {
  margin-left: 4px;
  color: #757575;
  font-size: 15px;
  line-height: 18px;
}

.hfield--select {
  display: flex;
  flex-direction: column;
  justify-content: space-between;
  padding: 12px 0 5px 1px;
}

.hfield--account {
  width: 192px;
  margin-left: 8px;
}

.hfield--portfolio {
  width: 191px;
  padding-left: 0;
}

.hfield label {
  color: #757575;
  font-size: 13.5px;
  line-height: 18px;
}

.hfield__value {
  color: #111;
  font-size: 15px;
  line-height: 18px;
}

.arrow {
  position: absolute;
  width: 0;
  height: 0;
  border-left: 4.5px solid transparent;
  border-right: 4.5px solid transparent;
  border-top: 5px solid #757575;
}

.hfield .arrow {
  right: 10px;
  bottom: 11px;
}

.ticon {
  flex: none;
  height: 18px;
  fill: #8a8a8a;
}

.ticon--help {
  width: 18px;
  margin-left: 9px;
}

.ticon--bell {
  width: 16px;
  margin-left: 33px;
}

.ticon--grid {
  width: 18px;
  margin-left: 34px;
}

.ticon--out {
  width: 18px;
  margin-left: 26px;
}

.topbar__user {
  margin-left: 22px;
  font-size: 17.5px;
}

.topbar__avatar {
  display: flex;
  flex: none;
  align-items: center;
  justify-content: center;
  width: 56px;
  height: 56px;
  margin-left: 15px;
  border-radius: 50%;
  background: #7e57c2;
  color: #fff;
  font-size: 32px;
}

/* columns under the bar */
.layout {
  display: flex;
  flex: 1;
  min-height: 0;
}

.sidebar {
  display: flex;
  flex-direction: column;
  flex: 0 0 293px;
  background: #f5f5f5;
}

.sidebar__search {
  flex: 0 0 49px;
  box-sizing: border-box;
  padding: 18px 0 0 11px;
  border-bottom: 1px solid #e0e0e0;
  color: #9e9e9e;
  font-size: 14.5px;
  line-height: 16px;
}

.sidebar__body {
  display: flex;
  flex: 0 0 660px;
  margin-top: 5px;
  min-height: 0;
}

.sidebar__foot {
  flex: 1;
  padding: 3px 39px 10px 24px;
}

.sidebar__slot {
  height: 64px;
  background: #fafafa;
}

.menu {
  flex: 1;
  min-width: 0;
  overflow: hidden;
}

.menu--nav {
  padding-top: 12px;
  background: #eeeeee;
}

.menu--settings {
  background: #dddddd;
}

.menu__item {
  display: flex;
  align-items: center;
  box-sizing: border-box;
  height: 72px;
  color: #111;
}

.menu--nav .menu__item {
  padding: 0 20px 0 19px;
}

.menu--settings .menu__item {
  padding-left: 68px;
}

.menu--settings .menu__item:first-child {
  margin-top: -25px;
}

.menu__item--active {
  background: #f5f5f5;
}

.menu--nav .menu__item--active {
  box-shadow: inset 6px 0 0 #5cbdb9;
}

.menu--settings .menu__item--active {
  box-shadow: inset 5px 0 0 #5cbdb9;
}

.menu__icon {
  display: flex;
  flex: 0 0 34px;
  align-items: center;
  justify-content: center;
  margin-right: 26px;
  fill: #000;
}

.menu__label {
  flex: 1;
  white-space: nowrap;
  font-size: 15.7px;
}

.menu__chevron {
  flex: none;
  width: 10px;
  height: 6px;
  margin-top: -9px;
  fill: none;
  stroke: #111;
  stroke-width: 1.8;
}

/* scrollbars */
.scroll {
  display: flex;
  flex-direction: column;
  align-items: center;
  flex: 0 0 19px;
  background: #fcfcfc;
}

.scroll__up,
.scroll__down {
  flex: none;
  width: 0;
  height: 0;
  border-left: 6px solid transparent;
  border-right: 6px solid transparent;
}

.scroll__up {
  margin-top: 6px;
  border-bottom: 10px solid #8c8c8c;
}

.scroll__down {
  margin-top: 8px;
  border-top: 10px solid #8c8c8c;
}

.scroll__thumb {
  flex: none;
  width: 11px;
  border-radius: 6px;
  background: #8c8c8c;
}

.scroll--nav .scroll__thumb {
  height: 267px;
  margin-top: 353px;
}

.scroll--settings .scroll__thumb {
  height: 219px;
  margin-top: 192px;
}

.scroll--settings .scroll__up {
  margin-top: 7px;
}

.scroll--settings .scroll__down {
  margin-top: 184px;
}

.scroll--content .scroll__thumb {
  height: 482px;
  margin-top: 159px;
}

/* main */
.main {
  display: flex;
  flex-direction: column;
  flex: 1;
  min-width: 0;
}

.main__title {
  flex: 0 0 54px;
  box-sizing: border-box;
  padding: 16px 0 0 18px;
  background: #fff;
  color: #5cbdb9;
  font-size: 20.2px;
  font-weight: 500;
  line-height: 22px;
}

.main__panes {
  display: flex;
  flex: 0 0 680px;
  min-height: 0;
}

.settings {
  display: flex;
  flex-direction: column;
  flex: 0 0 382px;
  min-height: 0;
}

.settings__search {
  flex: 0 0 50px;
  box-sizing: border-box;
  padding: 18px 0 0 11px;
  border-bottom: 1px solid #e4e4e4;
  background: #f0f0f0;
  color: #9e9e9e;
  font-size: 14.5px;
  line-height: 16px;
}

.settings__body {
  display: flex;
  flex: 1;
  margin-top: 3px;
  min-height: 0;
}

.content {
  display: flex;
  flex: 1;
  min-width: 0;
  background: #fafafa;
}

.content__scroll {
  flex: 1;
  min-width: 0;
  padding: 0 22px 0 23px;
}

.card {
  box-sizing: border-box;
  border: 1px solid #dedede;
  border-radius: 5px;
  background: #fff;
}

.card--sms {
  height: 172px;
  padding: 0 15px 0 14px;
}

.card--inbox {
  width: 562px;
  height: 450px;
  margin-top: 18px;
  padding: 0 14px;
}

.card__title {
  box-sizing: border-box;
  height: 40px;
  margin: 0 0 0 -8px;
  padding-top: 3px;
  font-size: 15px;
  font-weight: 700;
  line-height: 20px;
}

.card--inbox .card__title {
  height: 35px;
  padding-top: 5px;
}

.fields {
  display: grid;
}

.fields--three {
  grid-template-columns: 383px 383px 1fr;
}

.fields--two {
  grid-template-columns: 575px 1fr;
  margin-top: 7px;
}

.field label {
  display: block;
  color: #757575;
  font-size: 13.5px;
  line-height: 20px;
}

.field__value {
  position: relative;
  box-sizing: border-box;
  height: 34px;
  padding-top: 12px;
  border-bottom: 1px solid #dcdcdc;
  font-size: 14.6px;
  line-height: 18px;
}

.field__value--placeholder {
  color: #757575;
}

.field .arrow {
  right: 8px;
  top: 19px;
}

.blur {
  display: grid;
  width: max-content;
  margin-top: 1px;
}

.blur i {
  display: block;
  height: 5px;
}

.blur--key {
  grid-template-columns: repeat(52, 5px);
}

.blur--secret {
  grid-template-columns: repeat(50, 5px);
  margin-top: -1px;
  margin-left: -2px;
}

.inbox {
  background: #fafafa;
}

.inbox__head,
.inbox__row {
  display: grid;
  grid-template-columns: 284px 123px 124px;
  align-items: center;
}

.inbox__head {
  box-sizing: border-box;
  height: 30px;
  border-bottom: 1px solid #e4e4e4;
}

.inbox__folder {
  padding-left: 5px;
  border-right: 1px solid #e0e0e0;
  line-height: 29px;
}

.inbox__col {
  border-right: 1px solid #e0e0e0;
  line-height: 29px;
  text-align: center;
}

.inbox__row {
  box-sizing: border-box;
  height: 46px;
  border-bottom: 2px solid #eeeeee;
}

.inbox__name {
  padding-left: 14px;
}

.inbox__check {
  display: flex;
  justify-content: center;
}

.check {
  box-sizing: border-box;
  width: 15px;
  height: 15px;
  border: 2px solid #8e8e8e;
  border-radius: 2px;
  background: #fff;
}

.check--on {
  border: 0;
  background: #5cbdb9;
}

.check svg {
  display: block;
  fill: none;
  stroke: #fff;
  stroke-width: 1.8;
}

/* bottom bar */
.savebar {
  display: flex;
  flex: 1;
  align-items: flex-start;
  justify-content: flex-end;
  padding: 13px 17px 0 0;
  background: #eeeeee;
}

.savebar__btn {
  display: flex;
  align-items: center;
  justify-content: center;
  gap: 7px;
  width: 98px;
  height: 36px;
  padding: 0;
  border: 0;
  border-radius: 2px;
  background: #5cbdb9;
  color: #fff;
  fill: #fff;
  font: 700 15.6px Roboto, sans-serif;
}

/* overlays */
.queue {
  position: absolute;
  top: 71px;
  right: 0;
  z-index: 3;
  display: flex;
  align-items: center;
  gap: 6px;
  box-sizing: border-box;
  width: 69px;
  height: 54px;
  padding-left: 19px;
  border-radius: 20px 0 0 20px;
  background: #5cbdb9;
  color: #fff;
  font-size: 14px;
  font-weight: 700;
}

.badge {
  position: absolute;
  z-index: 4;
  display: flex;
  align-items: center;
  justify-content: center;
  width: 29px;
  height: 29px;
  border-radius: 50%;
  background: #007bff;
  color: #fff;
  font-size: 16px;
  transform: translate(-50%, -50%);
}
</style>
